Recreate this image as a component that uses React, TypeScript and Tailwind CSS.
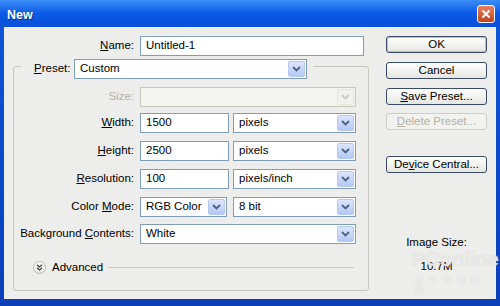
import React from "react";

const font = { fontFamily: '"Liberation Sans", Arial, sans-serif' };

function Chevron({ disabled }: { disabled?: boolean }) {
  return (
    <svg width="9" height="6" viewBox="0 0 9 6">
      <path
        d="M1 1 L4.5 4.5 L8 1"
        fill="none"
        stroke={disabled ? "#c9c9c2" : "#4d6185"}
        strokeWidth="1.8"
      />
    </svg>
  );
}

function Select({
  value,
  width,
  disabled,
}: {
  value?: string;
  width: string;
  disabled?: boolean;
}) {
  return (
    <div
      className={`${width} h-[20px] flex items-stretch p-[1px] border ${
        disabled ? "border-[#c9c7ba] bg-[#f3f3ef]" : "border-[#7f9db9] bg-white"
      }`}
    >
      <div className="flex-1 flex items-center pl-[4px] text-black">{value}</div>
      <div
        className={`w-[17px] flex items-center justify-center rounded-[2px] border ${
          disabled
            ? "border-[#e4e4de] bg-[#f1f1ed]"
            : "border-[#b5c8f2] bg-gradient-to-b from-[#dce6fd] to-[#b4c8f6]"
        }`}
      >
        <Chevron disabled={disabled} />
      </div>
    </div>
  );
}

function Input({ value, width }: { value: string; width: string }) {
  return (
    <div className={`${width} h-[20px] flex items-center pl-[5px] border border-[#7f9db9] bg-white text-black`}>
      {value}
    </div>
  );
}

function Label({ children, width = "w-[126px]" }: { children: React.ReactNode; width?: string }) {
  return <div className={`${width} text-right pr-[6px] text-black`}>{children}</div>;
}

function Button({
  children,
  isDefault,
  disabled,
  className = "",
}: {
  children: React.ReactNode;
  isDefault?: boolean;
  disabled?: boolean;
  className?: string;
}) {
  return (
    <div
      className={`w-[101px] h-[17px] flex items-center justify-center rounded-[3px] border ${
        disabled
          ? "border-[#cfcec6] bg-[#f2f2ee] text-[#b3b1a6]"
          : "border-[#3b4a66] bg-gradient-to-b from-[#ffffff] to-[#e6e6e0] text-black"
      } ${isDefault ? "shadow-[inset_0_0_0_1px_#a9c3ee]" : ""} ${className}`}
    >
      {children}
    </div>
  );
}

export default function App() {
  return (
    <div
      className="w-[500px] h-[306px] flex flex-col bg-gradient-to-b from-[#0d56dd] to-[#0a3fb8] text-[11.5px] overflow-hidden"
      style={font}
    >
      {/* title bar */}
      <div className="h-[27px] flex items-start justify-between bg-gradient-to-b from-[#3b8cf6] via-[#0a5ae6] to-[#0b4fd6]">
        <div className="pl-[7px] pt-[6px] text-white font-bold text-[12.5px] [text-shadow:1px_1px_0_#0a2f8a]">
          New
        </div>
        <div className="mt-[5px] mr-[5px] w-[18px] h-[18px] rounded-[3px] border border-white bg-gradient-to-b from-[#e8805f] to-[#c3431e] flex items-center justify-center">
          <svg width="10" height="10" viewBox="0 0 10 10">
            <path d="M1.5 1.5 L8.5 8.5 M8.5 1.5 L1.5 8.5" stroke="white" strokeWidth="2" />
          </svg>
        </div>
      </div>

      {/* body */}
      <div className="relative flex-1 mx-[4px] mb-[7px] bg-[#ededeb] flex">
        <div className="w-[382px] flex flex-col">
          <div className="mt-[9px] flex items-center">
            <Label width="w-[136px]">
              <span className="underline">N</span>ame:
            </Label>
            <Input value="Untitled-1" width="w-[224px]" />
          </div>

          <div className="mt-[10px] ml-[9px] w-[356px] h-[225px] border border-[#c8c8c0] rounded-[3px] flex flex-col">
            <div className="-mt-[8px] ml-[7px] w-[292px] h-[20px] bg-[#ededeb] flex items-center pl-[13px]">
              <div className="w-[40px] text-black">
                <span className="underline">P</span>reset:
              </div>
              <Select value="Custom" width="w-[233px]" />
            </div>

            <div className="mt-[8px] flex items-center">
              <Label>
                <span className="text-[#b5b3a8]">Size:</span>
              </Label>
              <Select width="w-[216px]" disabled />
            </div>

            <div className="mt-[6px] flex items-center">
              <Label>
                <span className="underline">W</span>idth:
              </Label>
              <Input value="1500" width="w-[89px]" />
              <div className="ml-[4px]">
                <Select value="pixels" width="w-[123px]" />
              </div>
            </div>

            <div className="mt-[8px] flex items-center">
              <Label>
                <span className="underline">H</span>eight:
              </Label>
              <Input value="2500" width="w-[89px]" />
              <div className="ml-[4px]">
                <Select value="pixels" width="w-[123px]" />
              </div>
            </div>

            <div className="mt-[8px] flex items-center">
              <Label>
                <span className="underline">R</span>esolution:
              </Label>
              <Input value="100" width="w-[89px]" />
              <div className="ml-[4px]">
                <Select value="pixels/inch" width="w-[123px]" />
              </div>
            </div>

            <div className="mt-[8px] flex items-center">
              <Label>
                Color <span className="underline">M</span>ode:
              </Label>
              <Select value="RGB Color" width="w-[87px]" />
              <div className="ml-[6px]">
                <Select value="8 bit" width="w-[123px]" />
              </div>
            </div>

            <div className="mt-[7px] flex items-center">
              <Label>
                Background <span className="underline">C</span>ontents:
              </Label>
              <Select value="White" width="w-[216px]" />
            </div>

            <div className="mt-[15px] flex items-center pl-[19px]">
              <div className="w-[13px] h-[13px] rounded-full border border-[#b9b9b2] bg-gradient-to-b from-white to-[#e8e8e4] flex items-center justify-center">
                <svg width="7" height="7" viewBox="0 0 7 7">
                  <path d="M1 0.8 L3.5 3 L6 0.8 M1 3.8 L3.5 6 L6 3.8" fill="none" stroke="#3a3a3a" strokeWidth="1.2" />
                </svg>
              </div>
              <div className="ml-[6px] text-black">Advanced</div>
              <div className="ml-[5px] w-[246px] h-px bg-[#c8c8c0]" />
            </div>
          </div>
        </div>

        <div className="w-[101px] flex flex-col items-center">
          <Button isDefault className="mt-[9px]">OK</Button>
          <Button className="mt-[9px]">Cancel</Button>
          <Button className="mt-[9px]">
            <span>
              <span className="underline">S</span>ave Preset...
            </span>
          </Button>
          <Button disabled className="mt-[8px]">
            <span>
              <span className="underline">D</span>elete Preset...
            </span>
          </Button>
          <Button className="mt-[26px]">
            <span>
              De<span className="underline">v</span>ice Central...
            </span>
          </Button>
          <div className="mt-[61px] text-black">Image Size:</div>
          <div className="mt-[7px] text-black">10.7M</div>
        </div>

        {/* faint site watermark */}
        <div className="absolute left-[410px] top-[221px] w-[82px] flex flex-col items-center pointer-events-none">
          <div className="text-[21px] leading-none font-bold text-white/45 tracking-tight [text-shadow:0_0_1px_#d4d4d0]">
            PConline
          </div>
          <div
            className="mt-[6px] text-[10px] leading-none text-white/55 tracking-[4px] [text-shadow:0_0_1px_#cfcfcb]"
            style={{ fontFamily: '"Noto Sans CJK SC", sans-serif' }}
          >
            太平洋电脑网
          </div>
        </div>
      </div>
    </div>
  );
}
